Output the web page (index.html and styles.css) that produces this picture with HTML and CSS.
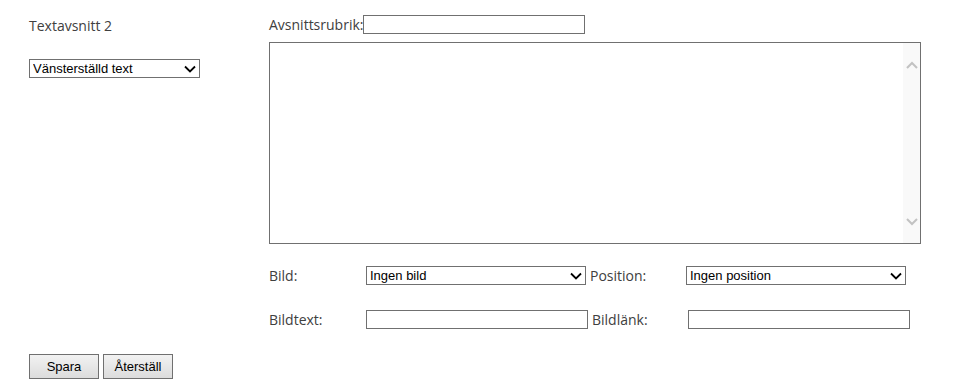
FILE: index.html
```html
<!DOCTYPE html>
<html lang="sv">
<head>
  <meta charset="UTF-8" />
  <title>Textavsnitt</title>
  <link rel="stylesheet" href="styles.css">
</head>
<body>

<form class="section-form">
  <div class="side">
    <div class="section-title">Textavsnitt 2</div>
    <select class="align-select">
      <option>Vänsterställd text</option>
      <option>Centrerad text</option>
      <option>Högerställd text</option>
    </select>
  </div>

  <div class="main">
    <div class="rubrik-row">
      <label for="rubrik">Avsnittsrubrik:</label>
      <input type="text" id="rubrik" class="rubrik-input" />
    </div>

    <div class="editor">
      <textarea id="brodtext"></textarea>
      <div class="scrollbar">
        <svg width="12" height="8" viewBox="0 0 12 8"><path d="M1 7 L6 2 L11 7" fill="none" stroke="#c2c2c2" stroke-width="2"/></svg>
        <svg width="12" height="8" viewBox="0 0 12 8"><path d="M1 1 L6 6 L11 1" fill="none" stroke="#c2c2c2" stroke-width="2"/></svg>
      </div>
    </div>

    <div class="field-row">
      <label class="field-label">Bild:</label>
      <select class="field-select">
        <option>Ingen bild</option>
      </select>
      <label class="field-label">Position:</label>
      <select class="field-select">
        <option>Ingen position</option>
        <option>Vänster</option>
        <option>Höger</option>
      </select>
    </div>

    <div class="field-row second">
      <label class="field-label">Bildtext:</label>
      <input type="text" class="field-input" />
      <label class="field-label">Bildlänk:</label>
      <input type="text" class="field-input" />
    </div>
  </div>

  <div class="actions">
    <button type="submit">Spara</button>
    <button type="reset">Återställ</button>
  </div>
</form>

</body>
</html>
```

FILE: styles.css
```css
body {
  margin: 0;
  background: #fff;
  font-family: "Open Sans", "Noto Sans", sans-serif;
  font-size: 14px;
  color: #404040;
}
.section-form {
  display: grid;
  grid-template-columns: 240px 652px;
  padding-left: 29px;
}
.side {
  padding-top: 17px;
}
.section-title {
  line-height: 18px;
  margin-bottom: 24px;
}
label {
  line-height: 19px;
}
select, input, button, textarea {
  font-family: "Liberation Sans", Arial, sans-serif;
  font-size: 13px;
  color: #000;
  box-sizing: border-box;
  margin: 0;
  vertical-align: top;
}
select {
  appearance: none;
  -webkit-appearance: none;
  display: block;
  height: 19px;
  border: 1px solid #707070;
  border-radius: 0;
  padding: 0 0 0 3px;
  background: #fff url("data:image/svg+xml,%3Csvg xmlns='http://www.w3.org/2000/svg' width='12' height='8' viewBox='0 0 12 8'%3E%3Cpath d='M1 1.5 L6 6.5 L11 1.5' fill='none' stroke='%23000' stroke-width='1.8'/%3E%3C/svg%3E") no-repeat right 3px center;
  line-height: 17px;
}
.align-select {
  width: 171px;
}
input[type="text"] {
  height: 19px;
  border: 1px solid #707070;
  padding: 0 2px;
  border-radius: 0;
}
.main {
  padding-top: 15px;
}
.rubrik-row {
  display: flex;
  align-items: center;
  height: 19px;
}
.rubrik-input {
  width: 222px;
}
.editor {
  display: flex;
  margin-top: 8px;
  height: 202px;
  border: 1px solid #707070;
  box-sizing: border-box;
}
.editor textarea {
  flex: 1;
  border: none;
  resize: none;
  outline: none;
  padding: 2px;
}
.scrollbar {
  width: 17px;
  background: #f9f9f9;
  display: flex;
  flex-direction: column;
  justify-content: space-between;
  align-items: center;
  padding: 18px 0 17px;
}
.field-row {
  display: flex;
  align-items: center;
  margin-top: 22px;
  height: 19px;
}
.field-row.second {
  margin-top: 25px;
}
.field-label {
  width: 97px;
}
.field-row .field-label + .field-select,
.field-row .field-label + .field-input {
  margin-right: 4px;
}
.field-label:nth-of-type(2) {
  width: 96px;
}
.field-select {
  width: 220px;
}
.field-input {
  width: 222px;
}
.actions {
  grid-column: 1 / 3;
  margin-top: 25px;
  display: flex;
  gap: 4px;
}
button {
  width: 70px;
  height: 25px;
  border: 1px solid #707070;
  background: linear-gradient(#f2f2f2, #dcdcdc);
  padding: 0;
  cursor: pointer;
}
```
